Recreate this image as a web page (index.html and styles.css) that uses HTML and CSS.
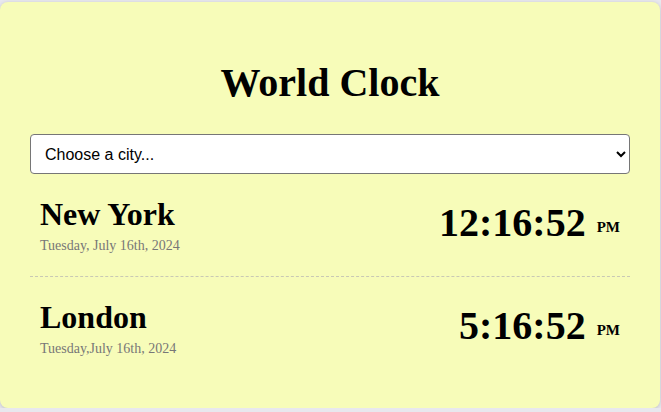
FILE: index.html
```html
<!DOCTYPE html>
<html lang="en">
<head>
<meta charset="utf-8">
<title>World Clock</title>
<link rel="stylesheet" href="styles.css">
</head>
<body>
<div class="card">
  <h1 class="title">World Clock</h1>
  <select class="city-select">
    <option>Choose a city...</option>
    <option>New York</option>
    <option>London</option>
  </select>
  <div class="row">
    <div class="city">
      <h2 class="city-name">New York</h2>
      <div class="city-date">Tuesday, July 16th, 2024</div>
    </div>
    <div class="time">12:16:52<span class="ampm">PM</span></div>
  </div>
  <div class="row last">
    <div class="city">
      <h2 class="city-name">London</h2>
      <div class="city-date">Tuesday,July 16th, 2024</div>
    </div>
    <div class="time">5:16:52<span class="ampm">PM</span></div>
  </div>
</div>
</body>
</html>
```

FILE: styles.css
```css
html, body {
  margin: 0;
  padding: 0;
}
body {
  background: #e8e8ee;
  font-family: "Liberation Serif", "Times New Roman", serif;
  color: #000;
}
.card {
  box-sizing: border-box;
  width: 660px;
  height: 406px;
  margin-top: 2px;
  background: #f7fcb9;
  border-radius: 8px;
  box-shadow: 0 1px 4px rgba(0, 0, 0, 0.18);
  padding: 30px 30px 28px 30px;
}
.title {
  margin: 28px 0 28px;
  font-size: 40px;
  line-height: 46px;
  font-weight: bold;
  text-align: center;
}
.city-select {
  display: block;
  box-sizing: border-box;
  width: 600px;
  height: 40px;
  margin: 0;
  padding: 0 10px;
  font-family: "Liberation Sans", Arial, sans-serif;
  font-size: 16px;
  color: #000;
  background: #fff;
  border: 1px solid #767676;
  border-radius: 4px;
}
.row {
  display: flex;
  justify-content: space-between;
  align-items: center;
  padding: 22px 10px;
  border-bottom: 1px dashed #c9c9b4;
}
.row.last {
  border-bottom: none;
}
.city-name {
  margin: 0 0 6px;
  font-size: 32px;
  line-height: 36px;
  font-weight: bold;
}
.city-date {
  font-size: 14px;
  line-height: 16px;
  color: #777;
}
.time {
  font-size: 40px;
  line-height: 46px;
  font-weight: bold;
}
.ampm {
  margin-left: 11px;
  font-size: 15px;
  vertical-align: 4px;
}
```
